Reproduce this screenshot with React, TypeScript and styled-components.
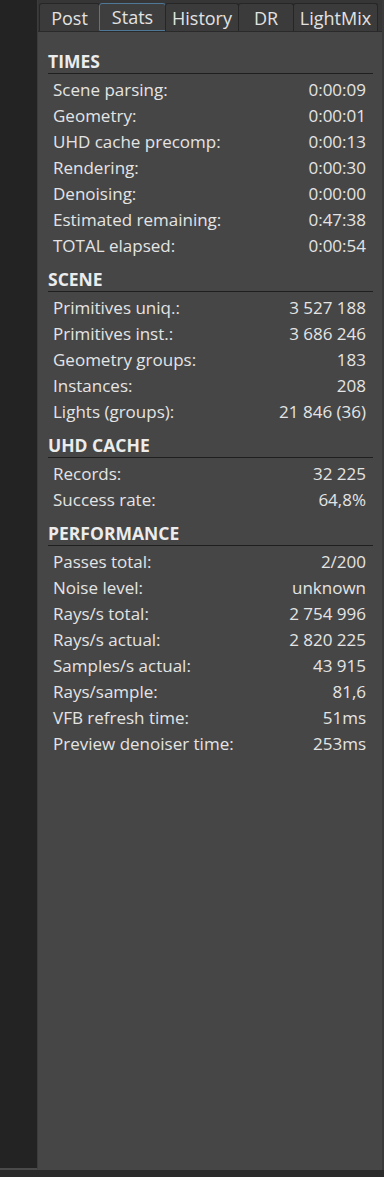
import React from 'react';
import styled, { createGlobalStyle } from 'styled-components';

const GlobalStyle = createGlobalStyle`
  html, body {
    margin: 0;
    padding: 0;
    background: #2b2b2b;
  }
  * {
    box-sizing: border-box;
  }
`;

type Stat = { label: string; value: string };
type Section = { title: string; rows: Stat[] };

const sections: Section[] = [
  {
    title: 'TIMES',
    rows: [
      { label: 'Scene parsing:', value: '0:00:09' },
      { label: 'Geometry:', value: '0:00:01' },
      { label: 'UHD cache precomp:', value: '0:00:13' },
      { label: 'Rendering:', value: '0:00:30' },
      { label: 'Denoising:', value: '0:00:00' },
      { label: 'Estimated remaining:', value: '0:47:38' },
      { label: 'TOTAL elapsed:', value: '0:00:54' },
    ],
  },
  {
    title: 'SCENE',
    rows: [
      { label: 'Primitives uniq.:', value: '3 527 188' },
      { label: 'Primitives inst.:', value: '3 686 246' },
      { label: 'Geometry groups:', value: '183' },
      { label: 'Instances:', value: '208' },
      { label: 'Lights (groups):', value: '21 846 (36)' },
    ],
  },
  {
    title: 'UHD CACHE',
    rows: [
      { label: 'Records:', value: '32 225' },
      { label: 'Success rate:', value: '64,8%' },
    ],
  },
  {
    title: 'PERFORMANCE',
    rows: [
      { label: 'Passes total:', value: '2/200' },
      { label: 'Noise level:', value: 'unknown' },
      { label: 'Rays/s total:', value: '2 754 996' },
      { label: 'Rays/s actual:', value: '2 820 225' },
      { label: 'Samples/s actual:', value: '43 915' },
      { label: 'Rays/sample:', value: '81,6' },
      { label: 'VFB refresh time:', value: '51ms' },
      { label: 'Preview denoiser time:', value: '253ms' },
    ],
  },
];

const tabs = [
  { name: 'Post', width: 61 },
  { name: 'Stats', width: 67 },
  { name: 'History', width: 74 },
  { name: 'DR', width: 56 },
  { name: 'LightMix', width: 85 },
];

const Screen = styled.div`
  width: 384px;
  height: 1177px;
  display: flex;
  flex-direction: column;
  font-family: 'Open Sans', 'Noto Sans', sans-serif;
  overflow: hidden;
`;

const Main = styled.div`
  flex: 1;
  display: flex;
`;

const SidePane = styled.div`
  width: 38px;
  background: #232323;
  border-right: 1px solid #3c3c3c;
  border-bottom: 2px solid #4a4a4a;
`;

const Panel = styled.div`
  flex: 1;
  display: flex;
  flex-direction: column;
  background: #464646;
  border-right: 2px solid #3a3a3a;
`;

const TabBar = styled.div`
  display: flex;
  padding: 3px 0 0 1px;
  background: #363636;
  border-bottom: 1px solid #2a2a2a;
`;

const Tab = styled.div<{ $width: number; $active?: boolean }>`
  width: ${(p) => p.$width}px;
  height: 28px;
  display: flex;
  align-items: center;
  justify-content: center;
  font-size: 18px;
  color: #e2e2e2;
  background: ${(p) => (p.$active ? '#3e3e3e' : '#3b3b3b')};
  border: 1px solid ${(p) => (p.$active ? '#4e7896' : '#262626')};
  border-bottom: ${(p) => (p.$active ? '1px solid #4e7896' : 'none')};
  border-radius: 3px 3px 0 0;
  margin-right: -1px;
`;

const Content = styled.div`
  padding: 8px 9px 0 10px;
`;

const SectionBlock = styled.div`
  margin-top: 9px;
`;

const Heading = styled.div`
  height: 25px;
  font-size: 17.5px;
  font-weight: 700;
  line-height: 24px;
  color: #ececec;
  border-bottom: 1px solid #1f1f1f;
`;

const Rows = styled.div`
  margin-top: 2px;
  padding: 0 7px 0 5px;
`;

const Row = styled.div`
  height: 26px;
  display: flex;
  align-items: center;
  justify-content: space-between;
  font-size: 17px;
  color: #e4e4e4;
`;

const BottomStrip = styled.div`
  height: 7px;
  background: #2b2b2b;
`;

export default function App() {
  return (
    <Screen>
      <GlobalStyle />
      <Main>
        <SidePane />
        <Panel>
          <TabBar>
            {tabs.map((t) => (
              <Tab key={t.name} $width={t.width} $active={t.name === 'Stats'}>
                {t.name}
              </Tab>
            ))}
          </TabBar>
          <Content>
            {sections.map((s) => (
              <SectionBlock key={s.title}>
                <Heading>{s.title}</Heading>
                <Rows>
                  {s.rows.map((r) => (
                    <Row key={r.label}>
                      <span>{r.label}</span>
                      <span>{r.value}</span>
                    </Row>
                  ))}
                </Rows>
              </SectionBlock>
            ))}
          </Content>
        </Panel>
      </Main>
      <BottomStrip />
    </Screen>
  );
}
